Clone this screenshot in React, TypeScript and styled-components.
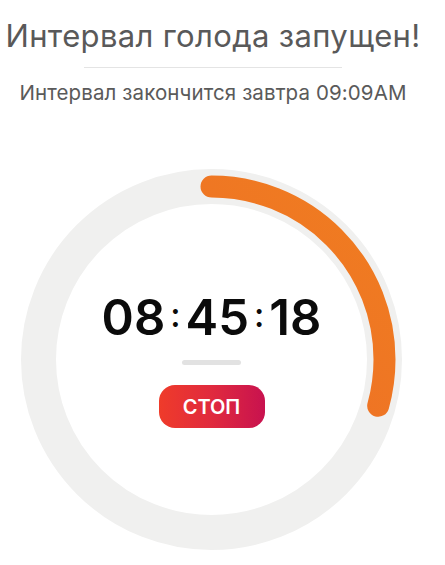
import React from 'react'
import styled, { createGlobalStyle } from 'styled-components'

const GlobalStyle = createGlobalStyle`
  html, body {
    margin: 0;
    padding: 0;
    background: #ffffff;
  }
  body {
    font-family: Inter, 'Liberation Sans', Arial, sans-serif;
  }
`

const RING_SIZE = 381
const RING_WIDTH = 35
const ARC_WIDTH = 22
const progress = 0.293

const Page = styled.main`
  display: flex;
  flex-direction: column;
  align-items: center;
  width: 426px;
  padding-top: 17px;
`

const Title = styled.h1`
  margin: 0;
  font-family: Inter, 'Liberation Sans', Arial, sans-serif;
  font-weight: normal;
  font-size: 31px;
  line-height: 38px;
  letter-spacing: 0.35px;
  color: #595959;
  white-space: nowrap;
`

const Divider = styled.hr`
  width: 258px;
  height: 1px;
  margin: 12px 0 0;
  border: 0;
  background: #e4e4e4;
`

const Subtitle = styled.p`
  margin: 12px 0 0;
  font-family: Inter, 'Liberation Sans', Arial, sans-serif;
  font-size: 20.5px;
  line-height: 26px;
  letter-spacing: 0.1px;
  color: #5a5a5a;
  white-space: nowrap;
`

const RingArea = styled.section`
  display: grid;
  width: ${RING_SIZE}px;
  height: ${RING_SIZE}px;
  margin-top: 63px;
  margin-left: -3px;

  & > * {
    grid-area: 1 / 1;
  }
`

const Center = styled.div`
  display: flex;
  flex-direction: column;
  align-items: center;
  justify-content: center;
  padding-top: 2px;
`

const Clock = styled.div`
  display: flex;
  align-items: center;
  font-family: Inter, 'Liberation Sans', Arial, sans-serif;
  font-weight: 600;
  font-size: 49px;
  line-height: 50px;
  color: #0b0b0b;
`

const Colon = styled.span`
  font-size: 34px;
  font-weight: 500;
  padding: 0 5px;
  position: relative;
  top: -3px;
`

const Handle = styled.div`
  width: 59px;
  height: 5px;
  margin-top: 17px;
  border-radius: 3px;
  background: #e2e2e2;
`

const StopButton = styled.button`
  margin-top: 20px;
  width: 106px;
  height: 43px;
  border: 0;
  border-radius: 16px;
  background: linear-gradient(90deg, #ef3b2a 0%, #e02a3e 50%, #c8124f 100%);
  color: #ffffff;
  font-family: Inter, 'Liberation Sans', Arial, sans-serif;
  font-weight: 600;
  font-size: 20px;
  cursor: pointer;
`

const Ring: React.FC<{ value: number }> = ({ value }) => {
  const r = (RING_SIZE - RING_WIDTH) / 2
  const c = 2 * Math.PI * r
  const mid = RING_SIZE / 2
  return (
    <svg width={RING_SIZE} height={RING_SIZE} viewBox={`0 0 ${RING_SIZE} ${RING_SIZE}`}>
      <defs>
        <linearGradient id='arc' x1='0' y1='0' x2='1' y2='1'>
          <stop offset='0%' stopColor='#ec652b' />
          <stop offset='100%' stopColor='#f07d20' />
        </linearGradient>
      </defs>
      <circle cx={mid} cy={mid} r={r} fill='none' stroke='#f0f0ef' strokeWidth={RING_WIDTH} />
      <circle
        cx={mid}
        cy={mid}
        r={r}
        fill='none'
        stroke='url(#arc)'
        strokeWidth={ARC_WIDTH}
        strokeLinecap='round'
        strokeDasharray={`${c * value} ${c}`}
        transform={`rotate(-90 ${mid} ${mid})`}
      />
    </svg>
  )
}

const App: React.FC = () => {
  return (
    <Page>
      <GlobalStyle />
      <Title>Интервал голода запущен!</Title>
      <Divider />
      <Subtitle>Интервал закончится завтра 09:09AM</Subtitle>
      <RingArea>
        <Ring value={progress} />
        <Center>
          <Clock>
            08<Colon>:</Colon>45<Colon>:</Colon>18
          </Clock>
          <Handle />
          <StopButton type='button'>СТОП</StopButton>
        </Center>
      </RingArea>
    </Page>
  )
}

export default App
